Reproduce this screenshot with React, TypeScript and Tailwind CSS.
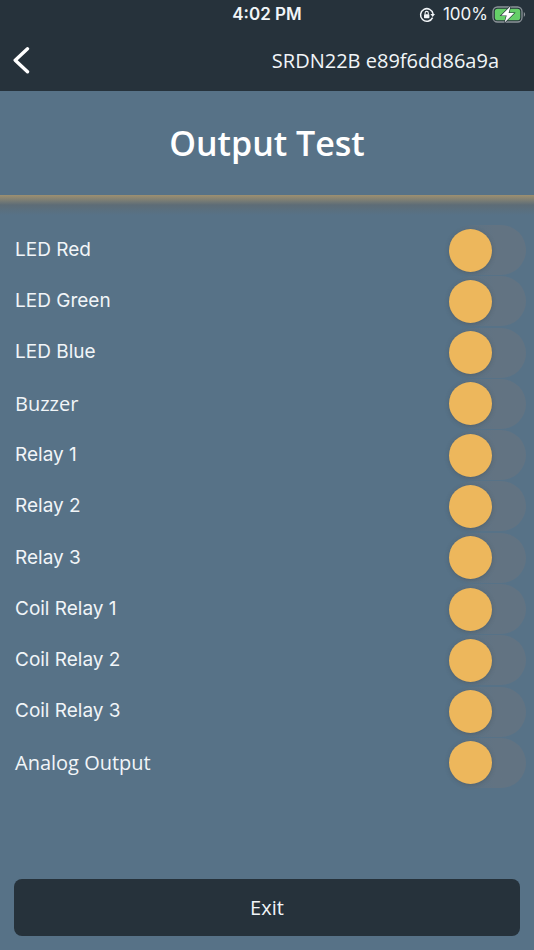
import React from "react";

const outputs: {name: string; className?: string}[] = [
    {name: "LED Red"},
    {name: "LED Green"},
    {name: "LED Blue"},
    {name: "Buzzer", className: "font-['Open_Sans',sans-serif] text-[20px]"},
    {name: "Relay 1"},
    {name: "Relay 2"},
    {name: "Relay 3"},
    {name: "Coil Relay 1"},
    {name: "Coil Relay 2"},
    {name: "Coil Relay 3"},
    {name: "Analog Output", className: "font-['Open_Sans',sans-serif] text-[20px]"},
];

export default function App() {
    return (
        <div className="flex min-h-screen flex-col bg-[#577287] font-['Open_Sans',sans-serif] text-[#f1f5f8]">
            <header className="bg-[#26323b]">
                <StatusBar/>
                <div className="flex h-[61px] items-center justify-between pr-[35px] pl-3">
                    <button type="button" aria-label="Back" className="text-white">
                        <svg className="h-7 w-5" viewBox="0 0 20 28" fill="none" stroke="currentColor"
                             strokeWidth="3.4" strokeLinecap="round" strokeLinejoin="round">
                            <path d="M15.5 1.8L3.2 13.2l12.3 11.6"/>
                        </svg>
                    </button>
                    <span className="text-[20px]">SRDN22B e89f6dd86a9a</span>
                </div>
            </header>

            <main className="flex flex-1 flex-col">
                <div className="flex h-26 items-center justify-center">
                    <h1 className="text-[34px] font-semibold text-white">Output Test</h1>
                </div>
                <div className="h-5 bg-linear-to-b from-[#9d9070] via-[#5d6c76] via-50% to-[#577287]"/>

                <ul className="flex flex-1 flex-col justify-between pt-[10px] pb-[91px]">
                    {outputs.map(output => (
                        <OutputRow key={output.name} name={output.name} className={output.className}/>
                    ))}
                </ul>
            </main>

            <footer className="px-[14px] pb-[14px]">
                <button type="button" className="h-[57px] w-full rounded-lg bg-[#26323b] text-[20px]">
                    Exit
                </button>
            </footer>
        </div>
    );
}

function StatusBar() {
    return (
        <div className="grid h-[30px] grid-cols-[1fr_auto_1fr] items-center px-2 font-[Inter,sans-serif] text-[17px]">
            <span className="col-start-2 font-semibold">4:02 PM</span>
            <div className="flex items-center justify-end gap-1">
                <svg className="mr-1 h-4 w-4" viewBox="0 0 16 16" fill="none">
                    <path d="M13.6 10.6A6.3 6.3 0 1 1 14.1 7" stroke="currentColor" strokeWidth="1.5"/>
                    <path d="M11.4 7h4.6l-2.3 3z" fill="currentColor"/>
                    <rect x="5" y="7.2" width="5.4" height="4" rx=".7" fill="currentColor"/>
                    <path d="M6.1 7.4V6a1.6 1.6 0 0 1 3.2 0v1.4" stroke="currentColor" strokeWidth="1.1"/>
                </svg>
                <span>100%</span>
                <svg className="h-[18px] w-[34px]" viewBox="0 0 34 18">
                    <rect x="1" y="1" width="29" height="15" rx="4.5" fill="none" stroke="#8c9499" strokeWidth="1.3"/>
                    <rect x="2.8" y="2.8" width="25.4" height="11.4" rx="2.8" fill="#65cf68"/>
                    <path d="M31.8 6.1c1.8.8 1.8 4 0 4.8z" fill="#8c9499"/>
                    <path d="M18.6.1L9.2 9.5h5.5l-2.1 7.1 9.6-9.5h-5.6z" fill="#fff" stroke="#26323b"
                          strokeWidth="1.2" paintOrder="stroke"/>
                </svg>
            </div>
        </div>
    );
}

function OutputRow({name, className = "font-[Inter,sans-serif] text-[19px]"}: {
    name: string;
    className?: string;
}) {
    const [on, setOn] = React.useState(false);

    return (
        <li>
            <label className="flex h-[50px] items-center justify-between pr-2 pl-[15px]">
                <span className={className}>{name}</span>
                <input
                    type="checkbox"
                    role="switch"
                    checked={on}
                    onChange={() => setOn(value => !value)}
                    className="flex h-[50px] w-[78px] appearance-none items-center rounded-full bg-linear-to-r from-[#577287] to-[#627382] to-60% px-px before:h-[43px] before:w-[43px] before:rounded-full before:bg-[#edb75c] before:shadow-[0_1px_4px_rgba(60,70,75,0.4)] before:content-[''] checked:justify-end checked:to-[#8b8063]"
                />
            </label>
        </li>
    );
}
